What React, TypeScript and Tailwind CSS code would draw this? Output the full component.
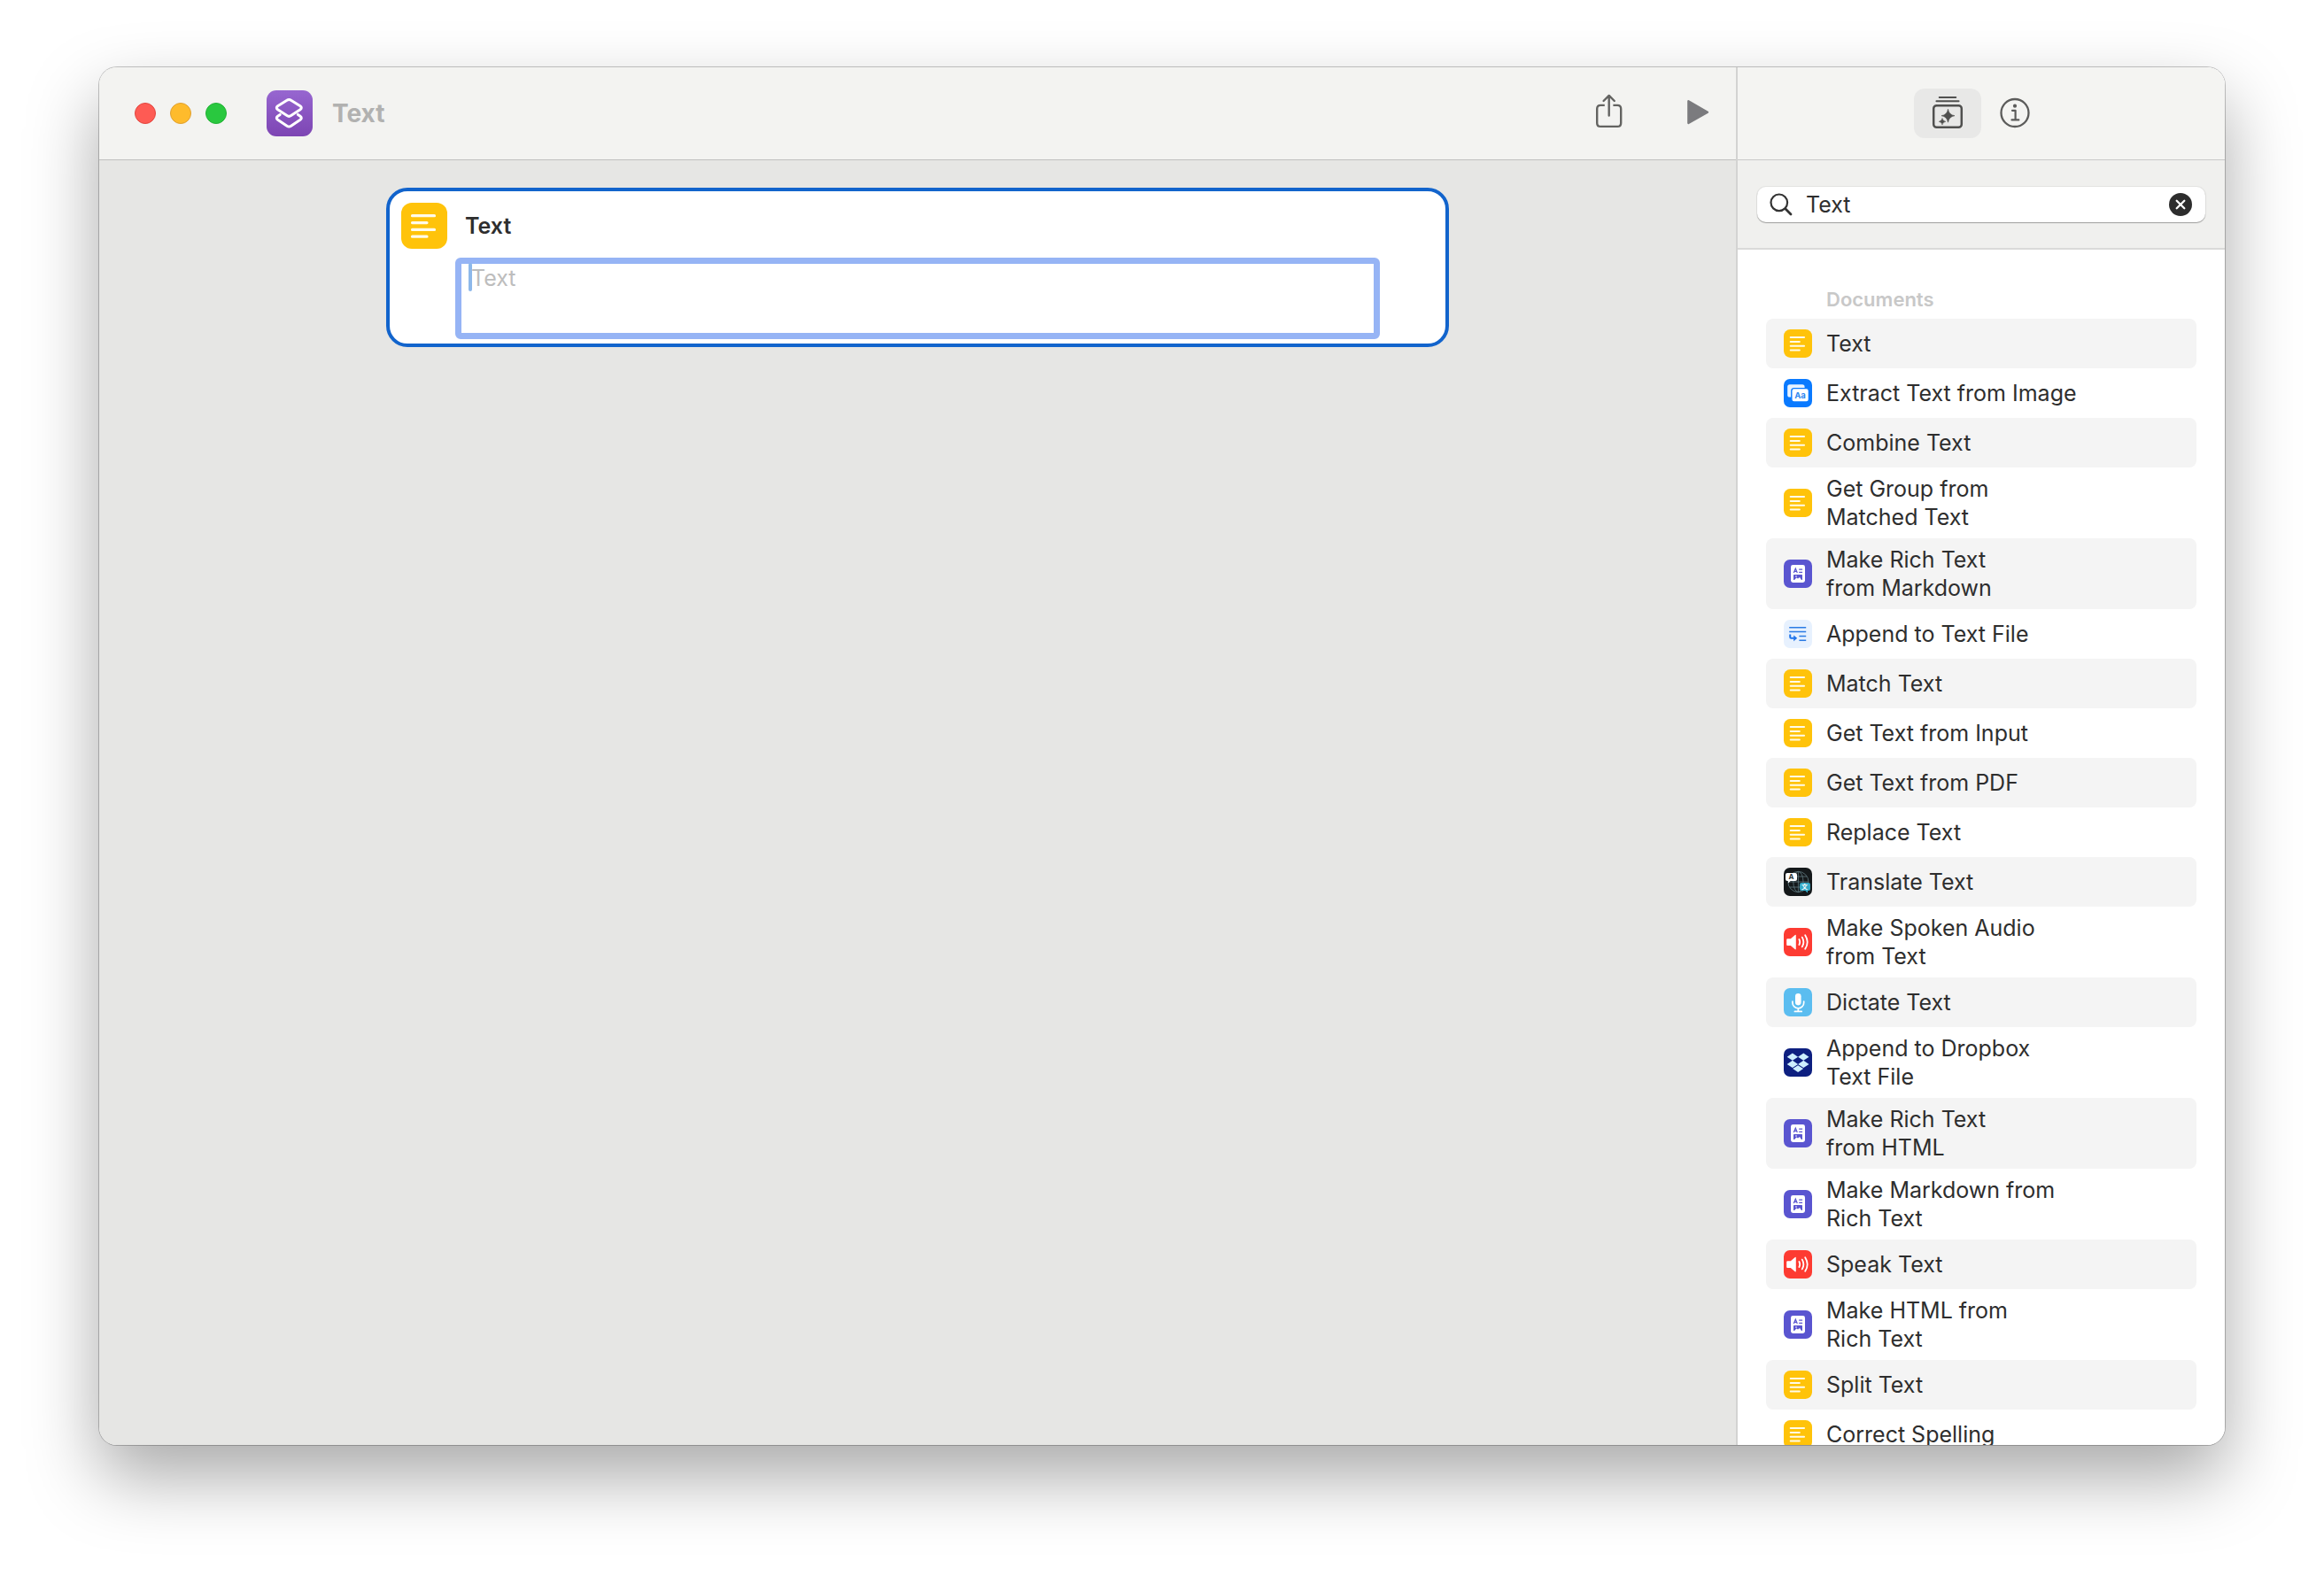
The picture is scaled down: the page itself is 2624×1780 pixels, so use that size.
import type { ReactNode } from "react";

type Kind = "text" | "extract" | "rich" | "append" | "translate" | "audio" | "dictate" | "dropbox";

const ACTIONS: { label: string; kind: Kind }[] = [
  { label: "Text", kind: "text" },
  { label: "Extract Text from Image", kind: "extract" },
  { label: "Combine Text", kind: "text" },
  { label: "Get Group from\nMatched Text", kind: "text" },
  { label: "Make Rich Text\nfrom Markdown", kind: "rich" },
  { label: "Append to Text File", kind: "append" },
  { label: "Match Text", kind: "text" },
  { label: "Get Text from Input", kind: "text" },
  { label: "Get Text from PDF", kind: "text" },
  { label: "Replace Text", kind: "text" },
  { label: "Translate Text", kind: "translate" },
  { label: "Make Spoken Audio\nfrom Text", kind: "audio" },
  { label: "Dictate Text", kind: "dictate" },
  { label: "Append to Dropbox\nText File", kind: "dropbox" },
  { label: "Make Rich Text\nfrom HTML", kind: "rich" },
  { label: "Make Markdown from\nRich Text", kind: "rich" },
  { label: "Speak Text", kind: "audio" },
  { label: "Make HTML from\nRich Text", kind: "rich" },
  { label: "Split Text", kind: "text" },
  { label: "Correct Spelling", kind: "text" },
];

function TextGlyph({ className }: { className: string }) {
  return (
    <svg viewBox="0 0 52 52" className={className} aria-hidden="true">
      <rect width="52" height="52" rx="12" fill="#ffc30a" />
      <path
        d="M12.5 14.7H37.5M12.5 22.6H29M12.5 30.4H37.5M12.5 38.2H29"
        stroke="#fffbea"
        strokeWidth="3.2"
        strokeLinecap="round"
      />
    </svg>
  );
}

function Tile({ fill, children }: { fill: string; children: ReactNode }) {
  return (
    <svg viewBox="0 0 32 32" className="size-8 shrink-0" fill="none" aria-hidden="true">
      <rect width="32" height="32" rx="7" fill={fill} />
      {children}
    </svg>
  );
}

function ActionIcon({ kind }: { kind: Kind }) {
  switch (kind) {
    case "text":
      return <TextGlyph className="size-8 shrink-0" />;
    case "extract":
      return (
        <Tile fill="#0a7aff">
          <rect x="4.2" y="6.3" width="19.4" height="14.2" rx="2.6" fill="#e8f3ff" />
          <rect x="8.8" y="10.6" width="19.6" height="15.4" rx="2.8" fill="#fff" stroke="#0a7aff" strokeWidth="1.4" />
          <text x="18.6" y="21.8" textAnchor="middle" fontSize="9.5" fontWeight="700" fontFamily="Inter, sans-serif" fill="#2f86f0">
            Aa
          </text>
        </Tile>
      );
    case "rich":
      return (
        <Tile fill="#5a55d0">
          <rect x="8" y="6" width="16" height="20" rx="2.4" fill="#fff" />
          <path d="M11.3 15l2-5 2 5M12 13.4h2.7" stroke="#5a55d0" strokeWidth="1.2" />
          <path d="M17.2 11.2h3.9M17.2 14.4h3.9" stroke="#5a55d0" strokeWidth="1.3" />
          <rect x="11" y="17" width="10" height="6" rx="0.6" fill="#5a55d0" />
          <path d="M12 23l2.4-2.4 1.6 1 2-1.6 2 3z" fill="#fff" />
          <circle cx="14" cy="19" r="0.8" fill="#fff" />
        </Tile>
      );
    case "append":
      return (
        <Tile fill="#e7f1fe">
          <path d="M6.2 8.7H25.2M6.2 13.5H25.2M17.4 18.4H25.2M17.4 23.2H25.2" stroke="#2a7be4" strokeWidth="1.5" />
          <path d="M7.2 16.4v3.2q0 1.2 1.2 1.2h3.4" stroke="#1f74ea" strokeWidth="2" />
          <path d="M11.2 17.4l4 3.4-4 3.4z" fill="#1f74ea" />
        </Tile>
      );
    case "translate":
      return (
        <Tile fill="#14181a">
          <g stroke="#5f7a80" strokeWidth="0.8">
            <circle cx="16.4" cy="16" r="11.6" />
            <ellipse cx="16.4" cy="16" rx="5.6" ry="11.6" />
            <path d="M16.4 4.4v23.2M4.8 16h23.2M6.6 10h19.6M6.6 22h19.6" />
          </g>
          <path d="M4 6h9q2 0 2 2v5q0 2-2 2H7.6L5 17.4V15H4q-2 0-2-2V8q0-2 2-2z" fill="#fff" />
          <text x="8.5" y="13.4" textAnchor="middle" fontSize="8" fontWeight="700" fontFamily="Inter, sans-serif" fill="#30383a">
            A
          </text>
          <path d="M20 17h8q2 0 2 2v5q0 2-2 2h-1v2.4L24.4 26H20q-2 0-2-2v-5q0-2 2-2z" fill="#35a9c6" />
          <text x="23.6" y="24.3" textAnchor="middle" fontSize="7" fontWeight="700" fontFamily="'Noto Sans CJK SC', sans-serif" fill="#fff">
            文
          </text>
        </Tile>
      );
    case "audio":
      return (
        <Tile fill="#fd3b32">
          <path d="M4.2 12.2h3.6l5-4.2q1-.6 1 .6v15q0 1.200-1 .6l-5-4.200H4.200q-1 0-1-1V13.200q0-1 1-1z" fill="#fff" />
          <path
            d="M17.400 13q1.600 3 0 6M20.800 10.600q3.200 5.400 0 10.800M24.200 8.200q5 7.800 0 15.600"
            stroke="#fff"
            strokeWidth="1.800"
            strokeLinecap="round"
          />
        </Tile>
      );
    case "dictate":
      return (
        <Tile fill="#5bbdf0">
          <rect x="13" y="6" width="6.600" height="13.400" rx="3.300" fill="#fff" />
          <path d="M9.900 15v1.400a6.400 6.400 0 0 0 12.800 0V15M16.300 22.800V26M12.400 26.400h7.800" stroke="#fff" strokeWidth="1.700" strokeLinecap="round" />
        </Tile>
      );
    case "dropbox":
      return (
        <Tile fill="#0d1f80">
          <path
            d="M9.900 5.600l6.200 4.100-6.200 4.100-6.200-4.100zM22.300 5.600l6.200 4.100-6.200 4.100-6.200-4.100zM9.900 13.800l6.200 4.100-6.200 4.100-6.200-4.100zM22.300 13.800l6.200 4.100-6.200 4.100-6.200-4.100zM16.100 19.200l6 3.900-6 3.900-6-3.900z"
            fill="#cdeeff"
          />
        </Tile>
      );
  }
}

function ShortcutsLogo() {
  return (
    <svg viewBox="0 0 52 52" className="ml-[45px] size-13 shrink-0" fill="none" aria-hidden="true">
      <defs>
        <linearGradient id="logo-fill" x1="0" y1="0" x2="0" y2="1">
          <stop offset="0" stopColor="#9766d0" />
          <stop offset="1" stopColor="#7d45b3" />
        </linearGradient>
      </defs>
      <rect width="52" height="52" rx="11" fill="url(#logo-fill)" />
      <g stroke="#fff" strokeWidth="3" strokeLinejoin="round" strokeLinecap="round">
        <path d="M23 11.300Q25.300 9.600 27.600 11.300L38 17.800Q40.600 19.800 38 21.800L27.600 28.600Q25.300 30.200 23 28.600L12.600 21.800Q10 19.800 12.600 17.800Z" />
        <path d="M15.200 27.400L12.600 29.200Q10 31.200 12.600 33.200L23 40.200Q25.300 41.800 27.600 40.200L38 33.200Q40.600 31.200 38 29.200L35.400 27.400" />
      </g>
    </svg>
  );
}

function ShareIcon() {
  return (
    <svg viewBox="0 0 32 44" className="h-11 w-8" fill="none" stroke="#636361" strokeWidth="2.400" aria-hidden="true">
      <path d="M10.800 12.900H6.200q-4 0-4 4v16q0 4 4 4h19q4 0 4-4v-16q0-4-4-4H20.400" />
      <path d="M15.700 24.600V2.200M9.600 8L15.700 1.900 21.800 8" strokeLinecap="round" strokeLinejoin="round" />
    </svg>
  );
}

function LibraryIcon() {
  return (
    <svg viewBox="0 0 38 40" className="h-10 w-[38px]" fill="none" stroke="#50504f" aria-hidden="true">
      <rect x="3.200" y="11.200" width="31.600" height="24.600" rx="3.400" strokeWidth="2.500" />
      <path d="M9.700 2H28.300M6.400 6.300H31.600" strokeWidth="1.900" strokeLinecap="round" />
      <path d="M19.500 15.200Q20.500 21.700 27 22.700 20.500 23.700 19.500 30.200 18.500 23.700 12 22.700 18.500 21.700 19.500 15.200z" fill="#50504f" strokeWidth="0.600" />
      <path d="M13 25.500Q13.600 28.700 16.800 29.300 13.600 29.900 13 33.100 12.400 29.900 9.200 29.300 12.400 28.700 13 25.500z" fill="#50504f" strokeWidth="0.500" />
    </svg>
  );
}

function InfoIcon() {
  return (
    <svg viewBox="0 0 36 36" className="size-9" fill="none" stroke="#5c5c5b" aria-hidden="true">
      <circle cx="18" cy="17.500" r="15.500" strokeWidth="2.300" />
      <circle cx="18" cy="9.700" r="2.100" fill="#5c5c5b" stroke="none" />
      <path d="M15 14.800h3.600v10.400M14.500 25.400h7.800" strokeWidth="2.200" strokeLinecap="round" strokeLinejoin="round" />
    </svg>
  );
}

export default function App() {
  return (
    <div className="flex h-screen bg-white px-28 pt-19 pb-37 font-['Inter','Liberation_Sans',sans-serif] text-[25px] leading-8 text-[#2e2e2e]">
      <div className="flex min-w-0 flex-1 overflow-hidden rounded-[20px] shadow-[0_0_0_1px_rgba(0,0,0,0.22),0_36px_80px_rgba(0,0,0,0.34)]">
        <main className="flex min-w-0 flex-1 flex-col bg-[#e6e6e4]">
          <header className="flex h-[105px] shrink-0 items-center border-b border-[#bfbfbe] bg-[#f3f3f1] pr-[30px] pl-10">
            <div className="flex gap-4">
              <button aria-label="Close" className="size-6 rounded-full border border-[#e2453e] bg-[#fe5b54]" />
              <button aria-label="Minimize" className="size-6 rounded-full border border-[#e0a030] bg-[#febb2c]" />
              <button aria-label="Zoom" className="size-6 rounded-full border border-[#22b135] bg-[#29c83f]" />
            </div>
            <ShortcutsLogo />
            <h1 className="ml-[22px] text-[28px] font-bold text-[#b1b1b0]">Text</h1>
            <div className="ml-auto flex items-center gap-[71px]">
              <button aria-label="Share">
                <ShareIcon />
              </button>
              <button aria-label="Run">
                <svg viewBox="0 0 26 32" className="h-8 w-[26px]" aria-hidden="true">
                  <path d="M2.400 2.200L24 14.700 2.400 26.900z" fill="#7b7b7e" stroke="#7b7b7e" strokeWidth="2.400" strokeLinejoin="round" />
                </svg>
              </button>
            </div>
          </header>

          <section className="mx-auto mt-[31px] w-full max-w-[1200px] rounded-3xl border-4 border-[#1264cc] bg-white pt-[13px] pb-[5px]">
            <div className="flex items-center gap-5 pl-[13px]">
              <TextGlyph className="size-13 shrink-0" />
              <label htmlFor="text-action" className="font-semibold">
                Text
              </label>
            </div>
            <div className="relative mx-[74px] mt-[10px]">
              <textarea
                id="text-action"
                placeholder="Text"
                className="block h-23 w-full resize-none rounded-md border-7 border-[#96b4f5] bg-white pl-[11px] outline-none placeholder:text-[#bdbdbd]"
              />
              <span className="absolute top-[6px] left-[15px] h-8 w-1 rounded-full bg-[#8db8ea]" />
            </div>
          </section>
        </main>

        <aside className="flex w-[552px] shrink-0 flex-col border-l-2 border-[#d3d3d2] bg-white">
          <div className="flex h-[105px] shrink-0 items-center justify-center border-b border-[#c9c9c8] bg-[#f4f4f2]">
            <button aria-label="Action Library" className="flex h-14 w-19 items-center justify-center rounded-xl bg-[#e8e8e7]">
              <LibraryIcon />
            </button>
            <button aria-label="Shortcut Details" className="flex h-14 w-19 items-center justify-center">
              <InfoIcon />
            </button>
          </div>

          <div className="flex h-[101px] shrink-0 items-center border-b-2 border-[#dadad9] bg-[#f0f0ee] px-[22px]">
            <div className="flex h-10 w-full items-center rounded-[10px] bg-white pr-[15px] pl-[14px] shadow-[0_0_0_1px_rgba(0,0,0,0.05),0_1px_1px_rgba(0,0,0,0.3)]">
              <svg viewBox="0 0 26 26" className="size-[26px] shrink-0" fill="none" stroke="#333" strokeLinecap="round" aria-hidden="true">
                <circle cx="10.800" cy="10.800" r="9.300" strokeWidth="2.200" />
                <path d="M17.800 17.800L24 24" strokeWidth="2.800" />
              </svg>
              <input aria-label="Search actions" defaultValue="Text" className="ml-[15px] min-w-0 flex-1 outline-none" />
              <button aria-label="Clear search">
                <svg viewBox="0 0 26 26" className="size-[26px]" aria-hidden="true">
                  <circle cx="13" cy="13" r="13" fill="#2d2d2d" />
                  <path d="M8.700 8.700l8.600 8.600M17.300 8.700l-8.600 8.600" stroke="#fff" strokeWidth="2.300" strokeLinecap="round" />
                </svg>
              </button>
            </div>
          </div>

          <div className="min-h-0 flex-1 overflow-y-auto px-8 pt-10 [scrollbar-width:none]">
            <h2 className="pb-[6px] pl-17 text-[22px] font-semibold text-[#c8c8c8]">Documents</h2>
            <ul>
              {ACTIONS.map(({ label, kind }) => (
                <li key={label} className="group">
                  <button className="flex min-h-14 w-full items-center gap-4 rounded-lg px-5 py-2 text-left whitespace-pre-line group-odd:bg-[#f4f4f4]">
                    <ActionIcon kind={kind} />
                    {label}
                  </button>
                </li>
              ))}
            </ul>
          </div>
        </aside>
      </div>
    </div>
  );
}
